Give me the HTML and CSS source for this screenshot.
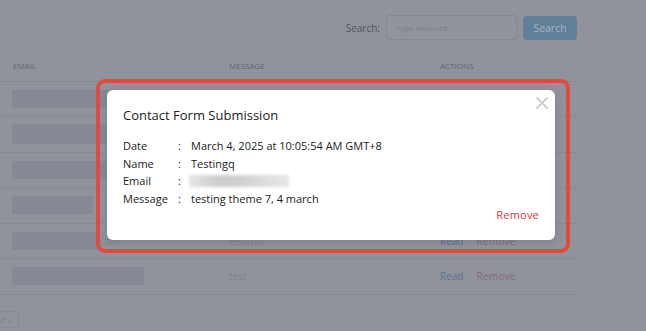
FILE: index.html
```html
<!DOCTYPE html>
<html lang="en">
<head>
<meta charset="utf-8">
<title>Contact Form Submissions</title>
<link rel="stylesheet" href="styles.css">
</head>
<body>
<div class="page">
  <div class="toolbar">
    <label class="search-label" for="kw">Search:</label>
    <input id="kw" class="search-input" type="text" placeholder="Type keyword">
    <button class="search-btn">Search</button>
  </div>
  <table class="subs">
    <thead>
      <tr><th class="c-email">Email</th><th class="c-msg">Message</th><th class="c-act">Actions</th></tr>
    </thead>
    <tbody>
      <tr><td><span class="blur" style="width:170px"></span></td><td></td><td></td></tr>
      <tr><td><span class="blur tall" style="width:170px"></span></td><td></td><td></td></tr>
      <tr><td><span class="blur" style="width:170px"></span></td><td></td><td></td></tr>
      <tr><td><span class="blur" style="width:81px"></span></td><td></td><td></td></tr>
      <tr><td><span class="blur" style="width:88px"></span><span class="tail">com</span></td><td class="muted">testttttt</td><td><a class="read">Read</a><a class="remove">Remove</a></td></tr>
      <tr><td><span class="blur" style="width:132px"></span></td><td class="muted">test</td><td><a class="read">Read</a><a class="remove">Remove</a></td></tr>
    </tbody>
  </table>
  <div class="pager"><span class="pg-btn">Next »</span></div>
</div>

<div class="modal">
  <button class="close" aria-label="Close">
    <svg width="12" height="12" viewBox="0 0 12 12"><path d="M1 1L11 11M11 1L1 11" stroke="#cfcfcf" stroke-width="1.8" stroke-linecap="round"/></svg>
  </button>
  <h2 class="title">Contact Form Submission</h2>
  <dl class="details">
    <dt>Date</dt><dd class="sep">:</dd><dd>March 4, 2025 at 10:05:54 AM GMT+8</dd>
    <dt>Name</dt><dd class="sep">:</dd><dd>Testingq</dd>
    <dt>Email</dt><dd class="sep">:</dd><dd><span class="email-blur"></span></dd>
    <dt>Message</dt><dd class="sep">:</dd><dd>testing theme 7, 4 march</dd>
  </dl>
  <div class="modal-foot"><a class="m-remove">Remove</a></div>
</div>

<div class="highlight"></div>
</body>
</html>
```

FILE: styles.css
```css
* { box-sizing: border-box; }
html, body { margin: 0; padding: 0; }
body {
  background: #90939c;
  font-family: "Open Sans", "Noto Sans", sans-serif;
  width: 646px;
  height: 331px;
  overflow: hidden;
  position: relative;
}
.page { width: 577px; }
.toolbar {
  display: flex;
  justify-content: flex-end;
  align-items: center;
  height: 40px;
  padding-top: 15px;
}
.search-label {
  font-size: 10px;
  color: #50545d;
  margin-right: 6px;
}
.search-input {
  width: 131px;
  height: 25px;
  border: 1px solid #858892;
  border-radius: 3px;
  background: #91949d;
  font: inherit;
  font-size: 8px;
  padding: 0 9px;
  margin: 0;
  outline: none;
}
.search-input::placeholder { color: #7b7f89; }
.search-btn {
  margin-left: 6px;
  width: 54px;
  height: 24px;
  border: 0;
  border-radius: 4px;
  background: #60809a;
  color: #a9b6c3;
  font: inherit;
  font-size: 10.5px;
  padding: 0;
}
.subs {
  width: 576px;
  border-collapse: collapse;
  margin-top: 15px;
  table-layout: fixed;
}
.subs th {
  text-align: left;
  font-size: 8px;
  font-weight: 500;
  text-transform: uppercase;
  color: #62666f;
  height: 26px;
  padding: 0 0 4px 13px;
  vertical-align: middle;
}
.subs th.c-email { width: 216px; }
.subs th.c-msg { width: 211px; }
.subs td {
  height: 35.5px;
  padding: 0 0 0 12px;
  border-top: 1px solid #878a94;
  vertical-align: middle;
  font-size: 10px;
  white-space: nowrap;
}
.subs tbody tr:last-child td { border-bottom: 1px solid #878a94; }
.subs td.muted { color: #7c808a; padding-left: 13px; }
.blur {
  display: inline-block;
  vertical-align: middle;
  height: 18px;
  background: #868993;
}
.blur.tall { height: 20px; }
.tail { color: #81848e; vertical-align: middle; }
.read { color: #5c6e93; margin-right: 13px; }
.remove { color: #87697a; letter-spacing: 0.3px; }
.subs td:last-child { padding-left: 13px; }
.pager { padding-top: 11px; }
.pg-btn {
  display: inline-block;
  margin-left: -19px;
  border: 1px solid #878a94;
  border-radius: 3px;
  padding: 2px 6px;
  font-size: 8px;
  color: #7c808a;
}

.modal {
  position: absolute;
  left: 107px;
  top: 90px;
  width: 448px;
  height: 150px;
  background: #fff;
  border-radius: 6px;
  padding: 16px 16px 0 16px;
  color: #1b1b1b;
  box-shadow: 0 2px 8px rgba(0,0,0,0.12);
}
.close {
  position: absolute;
  right: 7px;
  top: 7px;
  width: 12px;
  height: 12px;
  padding: 0;
  border: 0;
  background: none;
  display: flex;
}
.title {
  margin: 0;
  font-size: 13px;
  font-weight: 500;
  line-height: 18px;
}
.details {
  margin: 13px 0 0 0;
  display: grid;
  grid-template-columns: 55px 13px 1fr;
  grid-auto-rows: 17.5px;
  align-items: center;
  font-size: 11px;
}
.details dt, .details dd { margin: 0; line-height: 17.5px; }
.email-blur {
  display: block;
  width: 100px;
  height: 12px;
  margin-left: -2px;
  background: linear-gradient(90deg, #e6e6e6 0%, #cccccc 30%, #d2d2d2 55%, #e8e8e8 100%);
  filter: blur(1.5px);
}
.modal-foot {
  display: flex;
  justify-content: flex-end;
}
.m-remove {
  color: #d0393f;
  font-size: 11px;
  line-height: 16px;
  letter-spacing: 0.2px;
}

.highlight {
  position: absolute;
  left: 96px;
  top: 79px;
  width: 474px;
  height: 174px;
  border: 4px solid #e04a3f;
  border-radius: 9px;
}
```
